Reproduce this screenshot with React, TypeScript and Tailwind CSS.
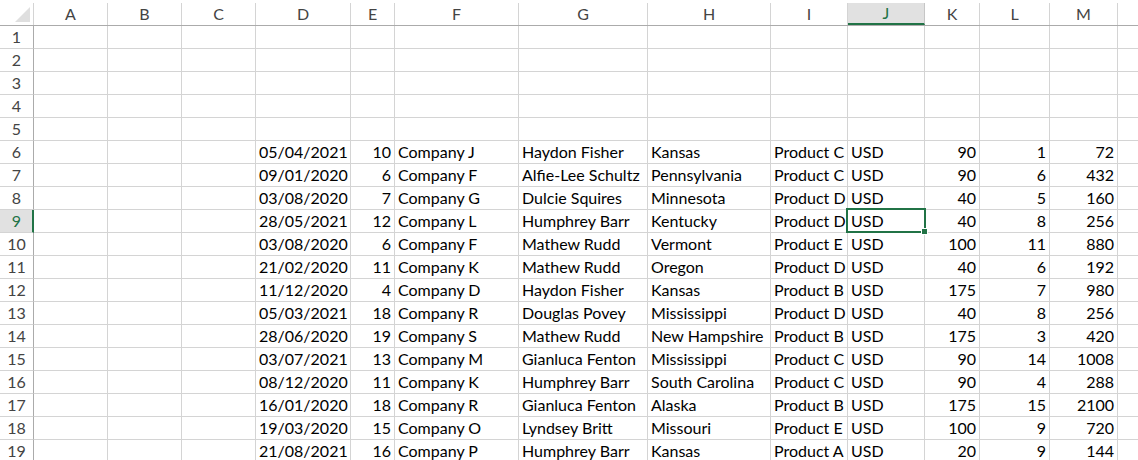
import React from "react";

const cols = [
  { key: "A", w: "w-[74px]" },
  { key: "B", w: "w-[74px]" },
  { key: "C", w: "w-[74px]" },
  { key: "D", w: "w-[95px]", right: true },
  { key: "E", w: "w-[44px]", right: true },
  { key: "F", w: "w-[124px]" },
  { key: "G", w: "w-[129px]" },
  { key: "H", w: "w-[123px]" },
  { key: "I", w: "w-[77px]" },
  { key: "J", w: "w-[77px]" },
  { key: "K", w: "w-[55px]", right: true },
  { key: "L", w: "w-[70px]", right: true },
  { key: "M", w: "w-[68px]", right: true },
  { key: "N", w: "w-[40px]", hideLabel: true },
];

// D..M
const rows: string[][] = [
  ["05/04/2021", "10", "Company J", "Haydon Fisher", "Kansas", "Product C", "USD", "90", "1", "72"],
  ["09/01/2020", "6", "Company F", "Alfie-Lee Schultz", "Pennsylvania", "Product C", "USD", "90", "6", "432"],
  ["03/08/2020", "7", "Company G", "Dulcie Squires", "Minnesota", "Product D", "USD", "40", "5", "160"],
  ["28/05/2021", "12", "Company L", "Humphrey Barr", "Kentucky", "Product D", "USD", "40", "8", "256"],
  ["03/08/2020", "6", "Company F", "Mathew Rudd", "Vermont", "Product E", "USD", "100", "11", "880"],
  ["21/02/2020", "11", "Company K", "Mathew Rudd", "Oregon", "Product D", "USD", "40", "6", "192"],
  ["11/12/2020", "4", "Company D", "Haydon Fisher", "Kansas", "Product B", "USD", "175", "7", "980"],
  ["05/03/2021", "18", "Company R", "Douglas Povey", "Mississippi", "Product D", "USD", "40", "8", "256"],
  ["28/06/2020", "19", "Company S", "Mathew Rudd", "New Hampshire", "Product B", "USD", "175", "3", "420"],
  ["03/07/2021", "13", "Company M", "Gianluca Fenton", "Mississippi", "Product C", "USD", "90", "14", "1008"],
  ["08/12/2020", "11", "Company K", "Humphrey Barr", "South Carolina", "Product C", "USD", "90", "4", "288"],
  ["16/01/2020", "18", "Company R", "Gianluca Fenton", "Alaska", "Product B", "USD", "175", "15", "2100"],
  ["19/03/2020", "15", "Company O", "Lyndsey Britt", "Missouri", "Product E", "USD", "100", "9", "720"],
  ["21/08/2021", "16", "Company P", "Humphrey Barr", "Kansas", "Product A", "USD", "20", "9", "144"],
];

function cellValue(rowNum: number, colIdx: number) {
  if (rowNum < 6) return "";
  const data = rows[rowNum - 6];
  if (!data) return "";
  // colIdx 3 = D
  const i = colIdx - 3;
  if (i < 0 || i >= data.length) return "";
  return data[i];
}

export default function App() {
  const rowNums = Array.from({ length: 19 }, (_, i) => i + 1);

  return (
    <div className="relative w-[1138px] h-[460px] overflow-hidden bg-white font-['Lato',sans-serif] text-[16px] text-black">
      {/* column headers */}
      <div className="flex h-[26px] border-b border-[#ababab] text-[#444444]">
        <div className="w-[34px] shrink-0 pt-[3px]">
          <div className="relative h-[22px] border-r border-[#d4d4d4]">
            <svg className="absolute left-[15px] top-[4px]" width="15" height="15" viewBox="0 0 15 15">
              <polygon points="15,0 15,15 0,15" fill="#dfdfdf" />
            </svg>
          </div>
        </div>
        {cols.map((c) =>
          c.key === "J" ? (
            <div key={c.key} className={`${c.w} shrink-0 pt-[3px]`}>
              <div className="h-[22px] bg-[#e1e1e1] border-r border-[#c6c6c6] border-b-2 border-b-[#217346] flex items-center justify-center leading-[20px] text-[#217346]">
                {c.key}
              </div>
            </div>
          ) : (
            <div key={c.key} className={`${c.w} shrink-0 pt-[3px]`}>
              <div className="h-[22px] border-r border-[#d4d4d4] flex items-center justify-center leading-[22px]">
                {c.hideLabel ? "" : c.key}
              </div>
            </div>
          )
        )}
      </div>

      {/* rows */}
      {rowNums.map((r) => (
        <div key={r} className="flex h-[23px]">
          {r === 9 ? (
            <div className="w-[34px] shrink-0 h-[23px] border-b border-[#d4d4d4] border-r-2 border-r-[#217346] bg-[#e1e1e1] text-[#217346] flex items-center justify-center leading-[22px] pl-[1px]">
              {r}
            </div>
          ) : (
            <div className="w-[34px] shrink-0 h-[23px] border-b border-[#d4d4d4] border-r border-r-[#ababab] text-[#444444] flex items-center justify-center leading-[22px]">
              {r}
            </div>
          )}
          {cols.map((c, ci) => (
            <div
              key={c.key}
              className={`${c.w} shrink-0 h-[23px] border-r border-b border-[#d4d4d4] leading-[22px] whitespace-nowrap overflow-visible px-[3px] ${
                c.right ? "text-right" : "text-left"
              }`}
            >
              {cellValue(r, ci)}
            </div>
          ))}
        </div>
      ))}

      {/* active cell J9 */}
      <div className="absolute left-[846px] top-[208px] w-[80px] h-[25px] border-2 border-[#217346]" />
      <div className="absolute left-[921px] top-[228px] w-[7px] h-[7px] bg-[#217346] border border-white" />
    </div>
  );
}
